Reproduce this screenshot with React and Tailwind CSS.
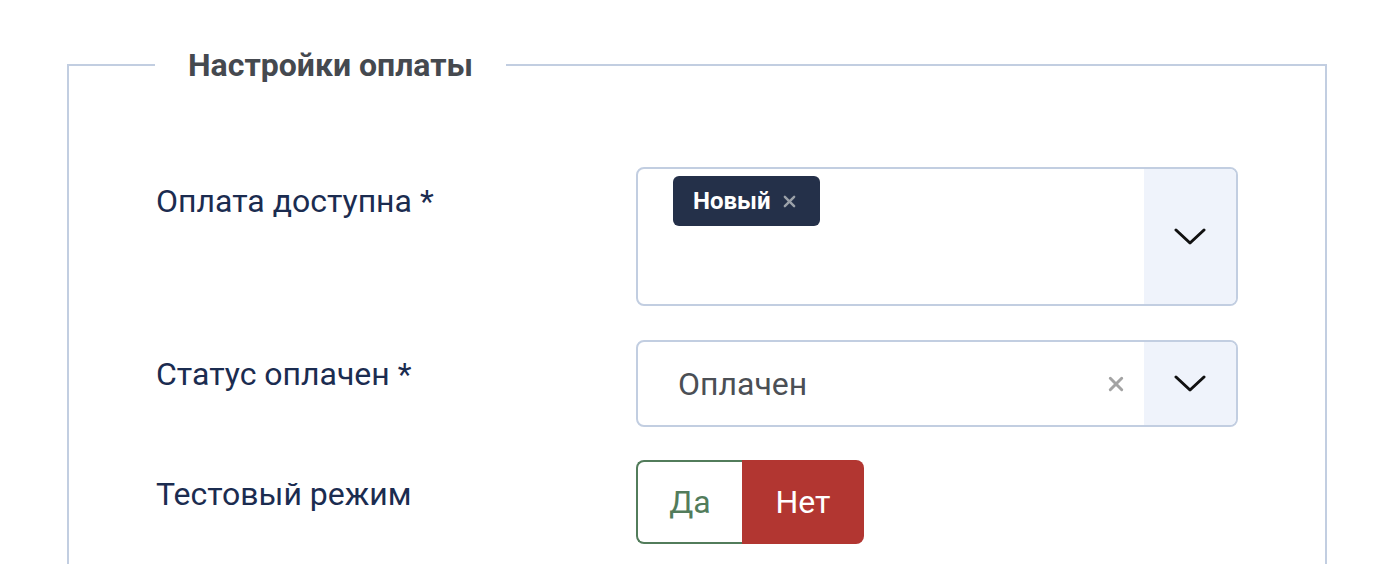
import React from "react";

function Chevron() {
  return (
    <svg width="32" height="18" viewBox="0 0 32 18" fill="none">
      <path d="M2 2 L16 15 L30 2" stroke="#111" strokeWidth="3" strokeLinecap="round" strokeLinejoin="round" />
    </svg>
  );
}

function Times({ color = "#9aa0a6", size = 14 }) {
  return (
    <svg width={size} height={size} viewBox="0 0 14 14" fill="none">
      <path d="M2 2 L12 12 M12 2 L2 12" stroke={color} strokeWidth="2.6" strokeLinecap="round" />
    </svg>
  );
}

export default function App() {
  return (
    <div className="w-[1376px] h-[564px] overflow-hidden bg-white" style={{ fontFamily: "Roboto, 'Noto Sans', sans-serif" }}>
      <fieldset className="ml-[67px] mt-[46px] w-[1260px] border-2 border-[#c2cee1] px-[87px] pt-[83px] pb-10">
        <legend className="ml-[-1px] px-[33px] text-[32px] leading-[38px] font-bold text-[#45494f]">
          Настройки оплаты
        </legend>
        <div className="grid grid-cols-[480px_602px]">
          <div className="pt-[16px] text-[32px] leading-[36px] text-[#1b2c50]">Оплата доступна *</div>
          <div className="flex h-[139px] rounded-lg border-2 border-[#c2cee1] overflow-hidden">
            <div className="flex-1 pl-[35px] pt-[7px]">
              <div className="inline-flex h-[50px] items-center gap-[12px] rounded-md bg-[#243049] pl-[20px] pr-[24px]">
                <span className="text-[24px] font-bold text-white">Новый</span>
                <Times color="#9aa0a8" size={13} />
              </div>
            </div>
            <div className="flex w-[92px] items-center justify-center bg-[#eff3fb]">
              <Chevron />
            </div>
          </div>

          <div className="mt-[34px] pt-[16px] text-[32px] leading-[36px] text-[#1b2c50]">Статус оплачен *</div>
          <div className="mt-[34px] flex h-[87px] rounded-lg border-2 border-[#c2cee1] overflow-hidden">
            <div className="flex flex-1 items-center pl-[40px] pr-[20px]">
              <span className="flex-1 text-[32px] text-[#4b4f55]">Оплачен</span>
              <Times color="#a3a3a3" size={16} />
            </div>
            <div className="flex w-[92px] items-center justify-center bg-[#eff3fb]">
              <Chevron />
            </div>
          </div>

          <div className="mt-[33px] pt-[16px] text-[32px] leading-[36px] text-[#1b2c50]">Тестовый режим</div>
          <div className="mt-[33px] flex h-[84px]">
            <div className="flex w-[106px] items-center justify-center rounded-l-lg border-2 border-r-0 border-[#527c5b] text-[32px] font-normal text-[#527c5b]">
              Да
            </div>
            <div className="flex w-[122px] items-center justify-center rounded-r-lg bg-[#b23631] text-[32px] font-normal text-white">
              Нет
            </div>
          </div>
        </div>
      </fieldset>
    </div>
  );
}
